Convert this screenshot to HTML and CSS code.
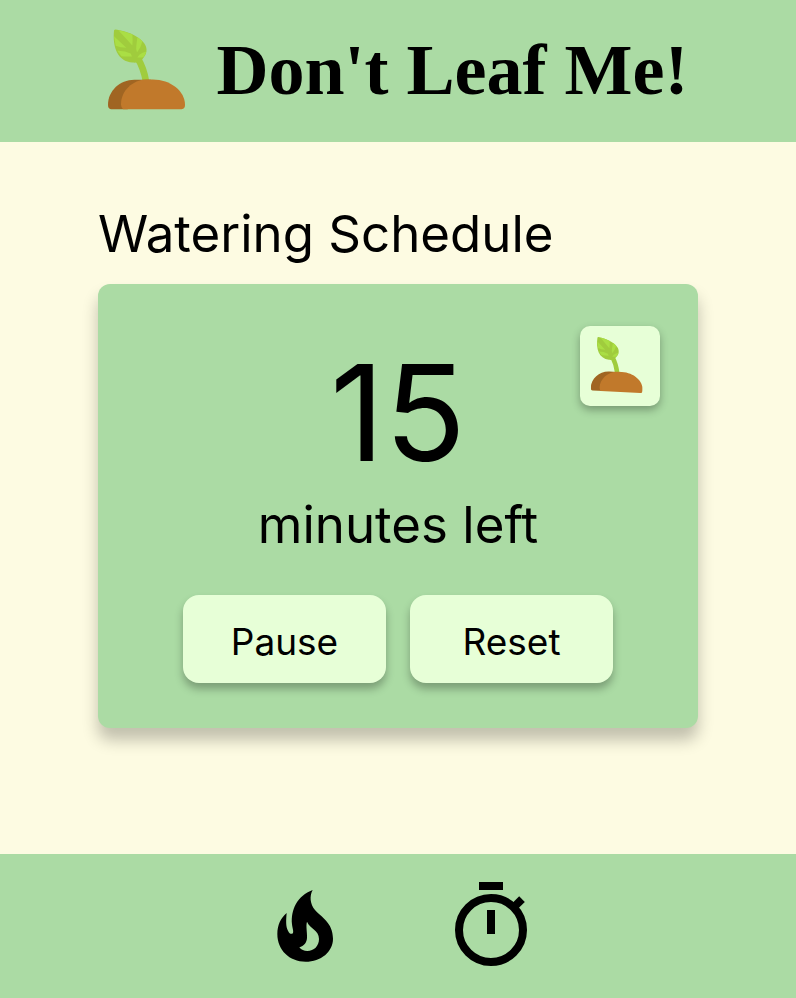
FILE: index.html
```html
<!DOCTYPE html>
<html lang="en">
  <head>
    <meta charset="UTF-8" />
    <meta name="viewport" content="width=device-width, initial-scale=1.0" />
    <link rel="stylesheet" href="styles.css" />
    <title>Don't Leaf Me!</title>
  </head>
  <body>
    <!-- shared plant drawing -->
    <svg class="sprite" aria-hidden="true">
      <symbol id="plant" viewBox="51 44 231 240">
        <path fill="none" stroke="#a0cc3d" stroke-width="20" d="M141 132Q158 160 165 200" />
        <path fill="#a0cc3d" d="M69 47Q70 44 74 44C108 49 138 62 155 80C169 94 171 112 158 128C151 139 140 145 125 143C80 140 64 98 69 47Z" />
        <path fill="#aade44" d="M82 46Q105 50 124 59Q126 76 124 92ZM139 67Q147 72 154 79Q150 99 138 113Q134 105 136 93ZM69 64L106 99Q88 99 74 93ZM79 108Q101 107 119 116L123 125Q104 126 91 124ZM145 120Q154 112 166 110Q163 121 157 127Q149 129 139 128Z" />
        <path fill="#a06522" d="M51 270C51 229 86 195 130 195H180L110 283H60Q51 283 51 270Z" />
        <path fill="#c1792b" d="M96 283Q90 277 90 268C90 228 125 195 166 194H185C239 194 282 229 282 270Q282 283 272 283Z" />
      </symbol>
    </svg>

    <header class="header">
      <svg class="logo" aria-hidden="true"><use href="#plant" /></svg>
      <h1>Don't Leaf Me!</h1>
    </header>

    <main class="main">
      <h2>Watering Schedule</h2>
      <section class="card">
        <button class="plant-btn" type="button" aria-label="Plant">
          <svg class="plant-icon" aria-hidden="true"><use href="#plant" /></svg>
        </button>
        <p class="time">15</p>
        <p class="unit">minutes left</p>
        <div class="actions">
          <button class="btn" type="button">Pause</button>
          <button class="btn" type="button">Reset</button>
        </div>
      </section>
    </main>

    <nav class="footer">
      <a href="#streak" aria-label="Streak">
        <svg class="nav-icon" viewBox="-9 24 288 288">
          <path fill-rule="evenodd" d="M158 60C148 78 150 102 165 120C182 140 219 157 219 206C219 245 183 275 137 275C88 275 52 240 52 192C52 165 62 145 80 129C78 150 77 170 84 182C88 190 92 193 97 191C103 187 97 176 96 163C92 118 112 78 158 60ZM141 155C137 168 142 186 141 204C140 218 132 228 118 232C124 240 132 243 142 243C162 243 177 228 177 207C177 180 150 176 141 155Z" />
        </svg>
      </a>
      <a href="#timer" aria-label="Timer">
        <svg class="nav-icon" viewBox="0 0 24 24">
          <path d="M9 1h6v2H9zM11 8h2v6h-2z" />
          <circle cx="12" cy="13" r="8" fill="none" stroke="#000" stroke-width="2" />
          <path d="M17 6.600L19.040 4.560L20.450 5.970L18.400 8.020Z" />
        </svg>
      </a>
    </nav>
  </body>
</html>
```
FILE: styles.css
```css
:root {
  --green: #abdba4;
  --light-green: #e7ffd7;
  --cream: #fdfbe2;
}

* {
  box-sizing: border-box;
}

body {
  margin: 0;
  min-height: 100vh;
  display: flex;
  flex-direction: column;
  background-color: var(--cream);
  color: #000;
  font-family: Inter, sans-serif;
}

.sprite {
  position: absolute;
  width: 0;
  height: 0;
}

/* header */
.header {
  display: flex;
  align-items: center;
  justify-content: center;
  gap: 32px;
  padding: 29px 0 32px;
  background-color: var(--green);
}

.logo {
  width: 77px;
  height: 81px;
}

h1 {
  margin: 0;
  font: bold 72px/80px "Liberation Serif", serif;
}

/* schedule */
.main {
  flex: 1;
  width: 100%;
  max-width: 600px;
  margin: 0 auto;
  padding-top: 56px;
}

h2 {
  margin: 0 0 14px;
  font-size: 51px;
  font-weight: 400;
  line-height: 72px;
}

.card {
  position: relative;
  padding: 48px 38px 45px;
  border-radius: 12px;
  background-color: var(--green);
  text-align: center;
  box-shadow: 0 12px 16px rgba(0, 0, 0, 0.24);
}

.card p {
  margin: 0;
}

.card .time {
  font-size: 134px;
  line-height: 160px;
}

.card .unit {
  margin-bottom: 37px;
  font-size: 51px;
  line-height: 66px;
}

button {
  border: none;
  background-color: var(--light-green);
  color: inherit;
  font-family: inherit;
  cursor: pointer;
}

.plant-btn {
  position: absolute;
  top: 42px;
  right: 38px;
  display: flex;
  align-items: center;
  justify-content: center;
  width: 80px;
  height: 80px;
  padding: 0 4px 2px 0;
  border-radius: 10px;
  box-shadow: 0 4px 8px rgba(0, 0, 0, 0.3);
}

.plant-icon {
  width: 52px;
  height: 58px;
  transform: rotate(3deg);
}

.actions {
  display: flex;
  justify-content: center;
  gap: 24px;
}

.btn {
  width: 203px;
  height: 88px;
  padding: 4px 0 0;
  border-radius: 16px;
  font-size: 37px;
  box-shadow: 0 6px 8px rgba(0, 0, 0, 0.28);
}

/* bottom nav */
.footer {
  display: flex;
  justify-content: center;
  gap: 90px;
  padding: 24px 0;
  background-color: var(--green);
}

.footer a {
  color: #000;
}

.nav-icon {
  display: block;
  width: 96px;
  height: 96px;
}
```
